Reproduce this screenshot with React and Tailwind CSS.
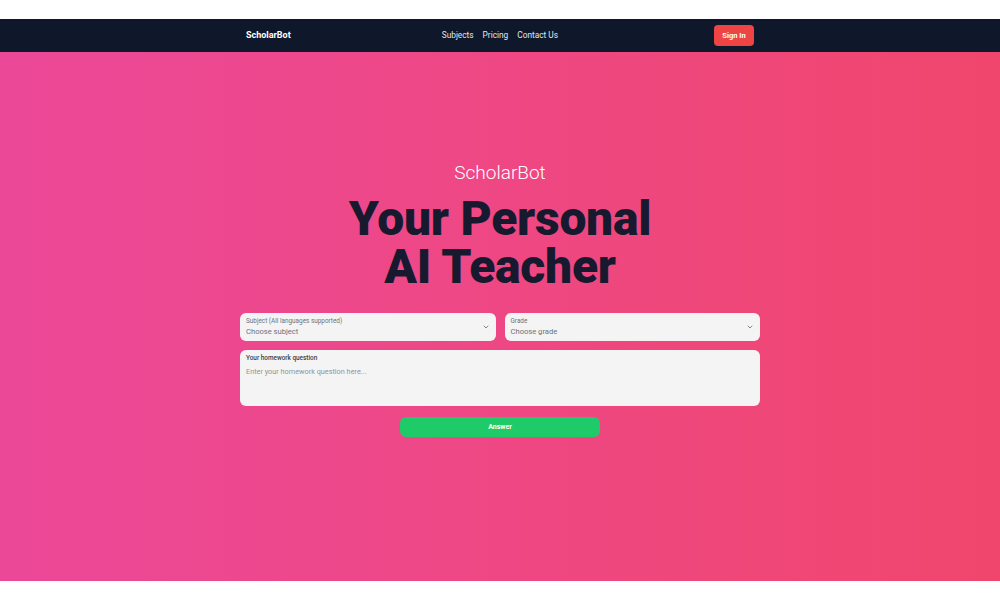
import React from "react";

function Chevron() {
  return (
    <svg width="8" height="8" viewBox="0 0 24 24" fill="none" stroke="#6b7280" strokeWidth="2.5" strokeLinecap="round" strokeLinejoin="round">
      <path d="m6 9 6 6 6-6" />
    </svg>
  );
}

export default function App() {
  return (
    <div className="w-[1000px] h-[600px] bg-white flex flex-col" style={{ fontFamily: "Roboto, 'Liberation Sans', sans-serif" }}>
      <div className="h-[19px]" />
      <nav className="h-[33px] bg-[#0f172a] flex items-center">
        <div className="w-[508px] mx-auto flex items-center justify-between">
          <span className="text-white font-bold text-[9px]">ScholarBot</span>
          <div className="flex gap-[9px] text-[#e5e7eb] text-[8.3px] pr-[5px]">
            <span>Subjects</span>
            <span>Pricing</span>
            <span>Contact Us</span>
          </div>
          <button className="bg-[#ef4444] text-white text-[7.5px] font-bold rounded-[4px] w-[40px] h-[21px] flex items-center justify-center">Sign In</button>
        </div>
      </nav>
      <main className="h-[529px] bg-gradient-to-r from-[#ec4899] to-[#f0466d] flex flex-col items-center pt-[107px]">
        <div className="text-white font-light text-[19px] leading-[28px]">ScholarBot</div>
        <h1 className="mt-[8px] text-[#171a2e] font-black text-[48px] leading-[48px] text-center tracking-[-0.005em]">
          <div>Your Personal</div>
          <div>AI Teacher</div>
        </h1>
        <div className="mt-[22px] w-[520px] flex flex-col">
          <div className="flex gap-[9px]">
            <div className="flex-1 h-[28px] bg-[#f4f4f4] rounded-[6px] px-[6px] flex items-center justify-between">
              <div className="flex flex-col">
                <span className="text-[6.4px] leading-[9px] text-[#6b7280]">Subject (All languages supported)</span>
                <span className="text-[7.6px] leading-[11px] text-[#6b7280]">Choose subject</span>
              </div>
              <Chevron />
            </div>
            <div className="flex-1 h-[28px] bg-[#f4f4f4] rounded-[6px] px-[6px] flex items-center justify-between">
              <div className="flex flex-col">
                <span className="text-[6.4px] leading-[9px] text-[#6b7280]">Grade</span>
                <span className="text-[7.6px] leading-[11px] text-[#6b7280]">Choose grade</span>
              </div>
              <Chevron />
            </div>
          </div>
          <div className="mt-[9px] h-[56px] bg-[#f4f4f4] rounded-[6px] px-[6px] pt-[4px]">
            <div className="text-[6.4px] leading-[9px] text-[#374151] font-medium">Your homework question</div>
            <div className="mt-[4px] text-[7.3px] leading-[10px] text-[#8f949c]">Enter your homework question here...</div>
          </div>
          <div className="mt-[11px] flex justify-center">
            <button className="w-[200px] h-[20px] bg-[#1fcb68] rounded-[6px] text-white text-[7px] font-bold flex items-center justify-center">Answer</button>
          </div>
        </div>
      </main>
      <div className="flex-1 bg-white" />
    </div>
  );
}
